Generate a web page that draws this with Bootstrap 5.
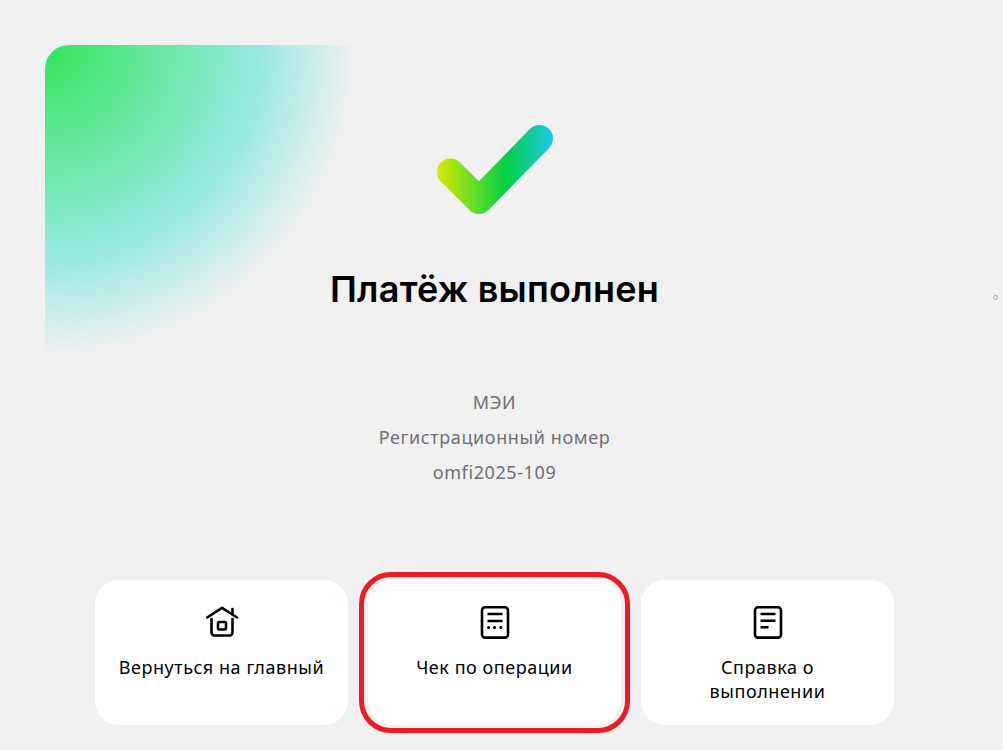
<!DOCTYPE html>
<html lang="ru">
<head>
    <meta charset="UTF-8">
    <meta name="viewport" content="width=device-width, initial-scale=1">
    <title>Платёж выполнен</title>
    <link href="https://cdn.jsdelivr.net/npm/bootstrap@5.3.0/dist/css/bootstrap.min.css" rel="stylesheet">
    <style>
        html, body {
            height: 750px;
            overflow: hidden;
        }
        body {
            background-color: #f1f1f1;
            font-family: "Noto Sans", "Open Sans", sans-serif;
            color: #000;
            position: relative;
        }
        .hero-glow {
            position: absolute;
            left: 45px;
            top: 45px;
            width: 312px;
            height: 312px;
            border-top-left-radius: 24px;
            background: radial-gradient(circle 312px at 0 0, #3de566 0%, #3de566 6%, #95e9e1 68%, #f1f1f1 100%);
        }
        .page-wrap {
            position: relative;
            width: 989px;
            padding-top: 125px;
        }
        .check-mark {
            display: block;
            width: 116px;
            height: 90px;
            margin: 0 auto;
        }
        .pay-title {
            font-family: "Inter", "Noto Sans", sans-serif;
            font-size: 36px;
            line-height: 44px;
            font-weight: 600;
            letter-spacing: 0.25px;
            margin: 52px 0 0;
        }
        .pay-info {
            margin-top: 74px;
            color: #6f6f74;
            font-size: 18px;
            letter-spacing: 0.6px;
            line-height: 35px;
        }
        .action-row {
            width: 799px;
            margin: 90px auto 0;
            gap: 20px;
        }
        .action-tile {
            position: relative;
            width: 253px;
            height: 145px;
            padding: 25px 22px 0;
            background: #fff;
            border: 0;
            border-radius: 24px;
            color: #000;
            font-size: 18px;
            letter-spacing: 0.55px;
            line-height: 24px;
        }
        .action-tile svg {
            display: block;
            flex: none;
            width: 36px;
            height: 36px;
            margin: 0 auto 14px;
        }
        .red-ring {
            position: absolute;
            left: -9px;
            right: -9px;
            top: -8px;
            bottom: -8px;
            border: 5px solid #ed1c24;
            border-radius: 32px;
        }
        .side-dot {
            position: absolute;
            left: 993px;
            top: 295px;
            width: 5px;
            height: 5px;
            border: 1px solid #a9a9b5;
            border-radius: 50%;
        }
    </style>
</head>
<body>
    <div class="hero-glow"></div>
    <div class="side-dot"></div>

    <div class="page-wrap text-center">
        <svg class="check-mark" viewBox="0 0 116 90" fill="none">
            <defs>
                <linearGradient id="checkGrad" gradientUnits="userSpaceOnUse" x1="0" y1="45" x2="116" y2="45">
                    <stop offset="0" stop-color="#d8ea00"/>
                    <stop offset="0.6" stop-color="#00d047"/>
                    <stop offset="1" stop-color="#20c8e4"/>
                </linearGradient>
            </defs>
            <path d="M13.5 47 L42 75.5 L102.5 13.5" stroke="url(#checkGrad)" stroke-width="27" stroke-linecap="round" stroke-linejoin="round"/>
        </svg>

        <h1 class="pay-title">Платёж выполнен</h1>

        <div class="pay-info">
            <div>МЭИ</div>
            <div>Регистрационный номер</div>
            <div>omfi2025-109</div>
        </div>

        <div class="action-row d-flex">
            <button class="action-tile d-flex flex-column align-items-center" type="button">
                <svg viewBox="0 0 36 36" fill="none" stroke="#000" stroke-width="2.6" stroke-linecap="round" stroke-linejoin="round">
                    <path d="M3.2 12.5 L18 2.8 L33 12.5"/>
                    <path d="M28.5 4 V8.5"/>
                    <path d="M7.5 14 V27.5 a3 3 0 0 0 3 3 H25.5 a3 3 0 0 0 3 -3 V14"/>
                    <rect x="14" y="17" width="8" height="7.5" rx="1"/>
                </svg>
                <span>Вернуться на главный</span>
            </button>
            <button class="action-tile d-flex flex-column align-items-center" type="button">
                <svg viewBox="0 0 36 36" fill="none" stroke="#000" stroke-width="2.6" stroke-linecap="round" stroke-linejoin="round">
                    <rect x="5" y="2.2" width="26" height="30.4" rx="3"/>
                    <path d="M10.5 9 H25.5 M10.5 16 H25.5" stroke-linecap="butt"/>
                    <path d="M11.5 22.5 H11.6 M17.5 22.5 H17.6 M23.8 22.5 H23.9" stroke-width="3"/>
                </svg>
                <span>Чек по операции</span>
                <span class="red-ring"></span>
            </button>
            <button class="action-tile d-flex flex-column align-items-center" type="button">
                <svg viewBox="0 0 36 36" fill="none" stroke="#000" stroke-width="2.6" stroke-linecap="round" stroke-linejoin="round">
                    <rect x="5" y="2.2" width="26" height="30.4" rx="3"/>
                    <path d="M10.5 9 H25.5 M10.5 15.7 H25.5 M10.5 22.3 H18.5" stroke-linecap="butt"/>
                </svg>
                <span>Справка о выполнении</span>
            </button>
        </div>
    </div>

    <script src="https://cdn.jsdelivr.net/npm/bootstrap@5.3.0/dist/js/bootstrap.bundle.min.js"></script>
</body>
</html>
